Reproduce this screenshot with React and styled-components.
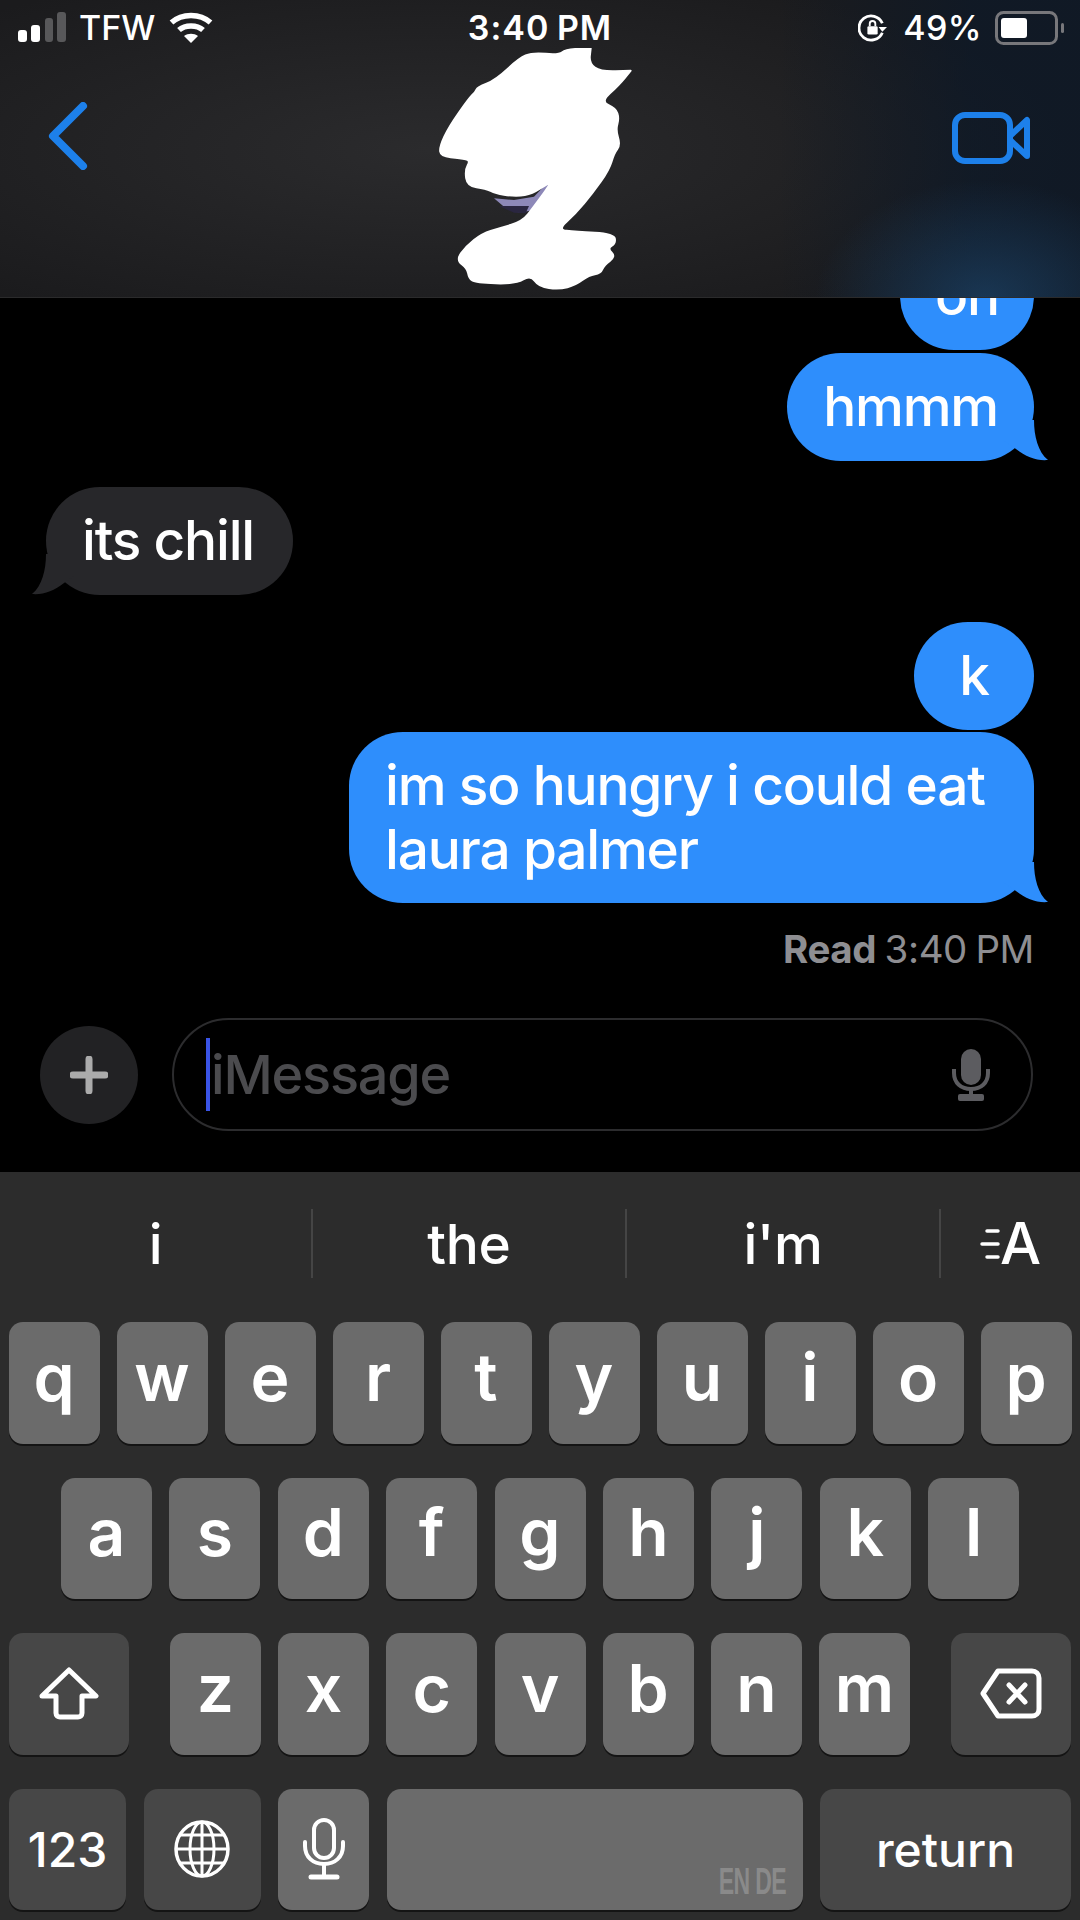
import React from 'react';
import styled, { createGlobalStyle } from 'styled-components';

const GlobalStyle = createGlobalStyle`
  html, body {
    margin: 0;
    padding: 0;
    background: #000;
  }
  * {
    box-sizing: border-box;
  }
`;

const FONT = `Inter, "Liberation Sans", sans-serif`;

const Screen = styled.div`
  width: 1080px;
  height: 1920px;
  display: flex;
  flex-direction: column;
  overflow: hidden;
  background: #000;
  font-family: ${FONT};
  color: #fff;
`;

const Header = styled.header`
  height: 298px;
  flex: none;
  border-bottom: 1px solid #2b2b2c;
  background:
    radial-gradient(170px 120px at 985px 300px, rgba(34, 84, 130, 0.5), rgba(34, 84, 130, 0) 100%),
    linear-gradient(90deg, rgba(10, 24, 42, 0) 72%, rgba(10, 24, 42, 0.62) 90%),
    radial-gradient(640px 190px at 430px 150px, #2b2b2d, #1b1b1d 100%);
`;

const StatusBar = styled.div`
  height: 48px;
  padding: 8px 15px 0 18px;
  display: grid;
  grid-template-columns: 1fr auto 1fr;
  align-items: center;
  font-size: 34px;
  line-height: 38px;
`;

const StatusLeft = styled.div`
  display: flex;
  align-items: center;
`;

const StatusRight = styled.div`
  display: flex;
  align-items: center;
  justify-content: flex-end;
`;

const Carrier = styled.span`
  margin-left: 12px;
  margin-right: 14px;
  font-weight: 500;
`;

const Clock = styled.span`
  font-weight: 600;
  word-spacing: -2px;
  letter-spacing: 1px;
  margin-left: -3px;
`;

const Percent = styled.span`
  margin-left: 15px;
  margin-right: 13px;
  font-weight: 500;
  letter-spacing: 0.4px;
`;

const NavRow = styled.div`
  height: 249px;
  padding: 0 50px 0 47px;
  display: grid;
  grid-template-columns: 1fr 240px 1fr;
`;

const BackIcon = styled.svg`
  width: 44px;
  height: 68px;
  margin-top: 54px;
`;

const VideoIcon = styled.svg`
  width: 78px;
  height: 52px;
  margin-top: 64px;
  justify-self: end;
`;

const Messages = styled.main`
  flex: 1;
  min-height: 0;
  overflow: hidden;
  padding: 0 46px;
  display: flex;
  flex-direction: column;
  justify-content: flex-end;
  align-items: flex-end;
`;

const Bubble = styled.div`
  position: relative;
  flex: none;
  min-height: 108px;
  padding: 22px ${(p) => (p.$width ? 0 : 36)}px;
  border-radius: 54px;
  font-size: 55px;
  line-height: 63.5px;
  letter-spacing: -1.2px;
  font-weight: 500;
  white-space: pre-line;
  background: ${(p) => (p.$incoming ? '#27272a' : '#2e8efc')};
  align-self: ${(p) => (p.$incoming ? 'flex-start' : 'flex-end')};
  margin-top: ${(p) => p.$top || 0}px;
  width: ${(p) => (p.$width ? `${p.$width}px` : 'auto')};
  min-width: ${(p) => p.$minWidth || 0}px;
  text-align: ${(p) => (p.$width ? 'center' : 'left')};
`;

const TailShape = styled.svg`
  position: absolute;
  bottom: 0;
  width: 46px;
  height: 41px;
  ${(p) => (p.$incoming ? 'left: -15px; transform: scaleX(-1);' : 'right: -15px;')}
`;

const ReadRow = styled.div`
  margin-top: 24px;
  margin-bottom: 47px;
  font-size: 38.5px;
  line-height: 44px;
  letter-spacing: -0.4px;
  word-spacing: -2px;
  color: #8e8e92;
`;

const ReadLabel = styled.span`
  font-weight: 700;
`;

const Composer = styled.div`
  height: 113px;
  flex: none;
  margin-bottom: 41px;
  padding: 0 47px 0 40px;
  display: flex;
  align-items: center;
  gap: 34px;
`;

const PlusButton = styled.div`
  width: 98px;
  height: 98px;
  flex: none;
  border-radius: 50%;
  background: #222224;
  display: flex;
  align-items: center;
  justify-content: center;
`;

const InputField = styled.div`
  flex: 1;
  height: 113px;
  border: 2px solid #2c2c2e;
  border-radius: 57px;
  padding: 0 40px 0 32px;
  display: flex;
  align-items: center;
`;

const Caret = styled.span`
  width: 4px;
  height: 73px;
  flex: none;
  background: #3a54e6;
`;

const Placeholder = styled.span`
  flex: 1;
  margin-left: 1px;
  font-size: 54px;
  font-weight: 500;
  letter-spacing: -1.2px;
  color: #4b4b4e;
`;

const Keyboard = styled.section`
  flex: none;
  height: 748px;
  background: #2c2c2c;
`;

const Suggestions = styled.div`
  height: 150px;
  padding-top: 37px;
  display: grid;
  grid-template-columns: 313px 314px 314px 139px;
  align-items: start;
`;

const Suggestion = styled.div`
  height: 69px;
  display: flex;
  align-items: center;
  justify-content: center;
  font-size: 55px;
  font-weight: 500;
  letter-spacing: -0.3px;
  border-right: ${(p) => (p.$last ? 'none' : '2px solid #454545')};
`;

const FormatA = styled.span`
  font-size: 58px;
  line-height: 69px;
  letter-spacing: 0;
`;

const KeyRows = styled.div`
  display: flex;
  flex-direction: column;
  gap: 34px;
`;

const KeyRow = styled.div`
  display: flex;
  justify-content: ${(p) => p.$justify || 'center'};
  gap: ${(p) => p.$gap || 17}px;
  padding: 0 9px;
`;

const KeyCluster = styled.div`
  display: flex;
  gap: 17.2px;
`;

const Key = styled.div`
  width: ${(p) => p.$width || 91}px;
  height: 121.5px;
  flex: none;
  border-radius: 14px;
  background: ${(p) => (p.$dark ? '#474747' : '#6b6b6b')};
  box-shadow: 0 2px 0 #141414;
  display: flex;
  align-items: center;
  justify-content: center;
  font-size: ${(p) => p.$size || 66}px;
  font-weight: ${(p) => p.$weight || 600};
`;

const LetterKey = styled(Key)`
  padding-bottom: 12px;
`;

const SpaceKey = styled(Key)`
  align-items: flex-end;
  justify-content: flex-end;
  padding: 0 16px 9px 0;
`;

const SpaceHint = styled.span`
  font-family: "Liberation Sans", sans-serif;
  font-size: 36px;
  line-height: 38px;
  font-weight: 700;
  letter-spacing: -1px;
  color: #8a8a8a;
  transform: scaleX(0.64);
  transform-origin: right center;
`;

const SignalIcon = () => (
  <svg width="49" height="32" viewBox="0 0 49 32">
    <rect x="0" y="18" width="9" height="12" rx="3" fill="#fff" />
    <rect x="13" y="13" width="9" height="17" rx="3" fill="#fff" />
    <rect x="27" y="6" width="8" height="24" rx="3" fill="#58585a" />
    <rect x="39" y="0" width="9" height="30" rx="3" fill="#58585a" />
  </svg>
);

const WifiIcon = () => (
  <svg width="44" height="32" viewBox="0 0 44 32" fill="none" stroke="#fff" strokeWidth="5.5">
    <path d="M2.5 10.5 C13 1 31 1 41.5 10.5" />
    <path d="M10 18 C16 12.5 28 12.5 34 18" />
    <path d="M22 31 L15 24 C19 21 25 21 29 24 Z" fill="#fff" stroke="none" />
  </svg>
);

const RotationLockIcon = () => (
  <svg width="30" height="28" viewBox="0 0 32 30" fill="none" stroke="#fff" strokeWidth="3">
    <path d="M26 20 A13 13 0 1 1 26 10" />
    <path d="M31 14 L26 19 L22 14 Z" fill="#fff" stroke="none" />
    <rect x="10" y="13" width="11" height="9" rx="1.5" fill="#fff" stroke="none" />
    <path d="M12.5 13 V10.5 A3 3 0 0 1 18.5 10.5 V13" strokeWidth="2" />
  </svg>
);

const BatteryIcon = () => (
  <svg width="70" height="34" viewBox="0 0 70 34" fill="none">
    <rect x="1.5" y="1.5" width="60" height="31" rx="7" stroke="#77777b" strokeWidth="3" />
    <rect x="6" y="7" width="26" height="20" rx="3" fill="#fff" />
    <rect x="66" y="12" width="3" height="10" rx="1.5" fill="#77777b" />
  </svg>
);

// outline of the scribble, smoothed with midpoints; doubled points stay sharp tips
const scribblePoints = [
  [175, 172], [230, 150], [300, 85], [340, 68], [420, 75], [440, 58], [515, 55], [515, 55], [510, 100],
  [545, 125], [635, 122], [635, 122], [600, 165], [545, 215], [590, 235], [600, 265], [590, 300], [604, 345],
  [585, 370], [570, 420], [520, 490], [470, 550], [415, 600], [470, 605], [585, 612], [590, 640],
  [565, 655], [590, 680], [555, 705], [545, 730], [510, 735], [470, 765], [420, 778], [360, 770],
  [335, 735], [290, 762], [170, 758], [150, 745], [145, 715], [112, 690], [140, 650], [190, 610],
  [240, 595], [310, 575], [345, 530], [402, 452], [370, 472], [330, 495], [280, 498], [230, 490],
  [200, 475], [145, 468], [138, 420], [155, 390], [125, 385], [65, 378], [62, 350], [90, 290],
  [150, 205], [170, 185],
];

const smoothPath = (points) => {
  const mid = (a, b) => [(a[0] + b[0]) / 2, (a[1] + b[1]) / 2];
  const start = mid(points[points.length - 1], points[0]);
  let d = `M${start[0]} ${start[1]}`;
  points.forEach((point, i) => {
    const end = mid(point, points[(i + 1) % points.length]);
    d += ` Q${point[0]} ${point[1]} ${end[0]} ${end[1]}`;
  });
  return `${d} Z`;
};

const RedactionScribble = () => (
  <svg width="240" height="249" viewBox="0 54 720 747">
    <path
      d="M225 505 L285 510 L345 500 L385 458 L402 458 L345 540 L300 548 L255 530 Z"
      fill="#8d88b8"
    />
    <path d="M240 528 L330 528 L320 550 L285 548 Z" fill="#2a2640" />
    <path d={smoothPath(scribblePoints)} fill="#fff" stroke="#fff" strokeWidth="6" strokeLinejoin="round" />
  </svg>
);

const Tail = ({ incoming }) => (
  <TailShape $incoming={incoming} viewBox="0 0 46 41">
    <path
      d="M31 0 C31 16 35 32 45 40 C34 41 23 37 13 29 L0 20 L0 0 Z"
      fill={incoming ? '#27272a' : '#2e8efc'}
    />
  </TailShape>
);

const MicSmall = () => (
  <svg width="40" height="52" viewBox="0 0 40 52" fill="none" stroke="#5c5c60" strokeWidth="4">
    <rect x="10" y="0" width="20" height="36" rx="10" fill="#5c5c60" stroke="none" />
    <path d="M3 20 V24 C3 34 10 40 20 40 C30 40 37 34 37 24 V20" />
    <path d="M20 40 V47" />
    <rect x="7" y="45" width="26" height="7" rx="2" fill="#5c5c60" stroke="none" />
  </svg>
);

const FormatLines = () => (
  <svg width="20" height="38" viewBox="0 0 20 38" stroke="#fff" strokeWidth="3.5" strokeLinecap="round">
    <path d="M7 6 H18" />
    <path d="M2 19 H18" />
    <path d="M7 32 H18" />
  </svg>
);

const ShiftIcon = () => (
  <svg width="60" height="53" viewBox="0 0 60 53" fill="none" stroke="#fff" strokeWidth="5" strokeLinejoin="round">
    <path d="M30 3 L57 29 H43 V46 C43 49 41 50 39 50 H21 C19 50 17 49 17 46 V29 H3 Z" />
  </svg>
);

const BackspaceIcon = () => (
  <svg width="62" height="51" viewBox="0 0 62 51" fill="none" stroke="#fff" strokeWidth="5" strokeLinejoin="round" strokeLinecap="round">
    <path d="M18 3 H52 C56 3 59 6 59 10 V41 C59 45 56 48 52 48 H18 L3 25.5 Z" />
    <path d="M29 17 L45 34 M45 17 L29 34" />
  </svg>
);

const GlobeIcon = () => (
  <svg width="56" height="58" viewBox="0 0 56 58" fill="none" stroke="#fff" strokeWidth="3">
    <ellipse cx="28" cy="29" rx="26" ry="27" strokeWidth="3.5" />
    <ellipse cx="28" cy="29" rx="12" ry="27" />
    <path d="M28 2 V56 M2 29 H54 M6 15 H50 M6 43 H50" />
  </svg>
);

const MicKeyIcon = () => (
  <svg width="44" height="62" viewBox="0 0 44 62" fill="none" stroke="#fff" strokeWidth="4" strokeLinecap="round">
    <rect x="12" y="2" width="20" height="38" rx="10" />
    <path d="M3 24 V28 C3 39 11 46 22 46 C33 46 41 39 41 28 V24" />
    <path d="M22 46 V57" />
    <path d="M9 59 H35" strokeWidth="5" />
  </svg>
);

const rowOne = ['q', 'w', 'e', 'r', 't', 'y', 'u', 'i', 'o', 'p'];
const rowTwo = ['a', 's', 'd', 'f', 'g', 'h', 'j', 'k', 'l'];
const rowThree = ['z', 'x', 'c', 'v', 'b', 'n', 'm'];

const App = () => (
  <Screen>
    <GlobalStyle />
    <Header>
      <StatusBar>
        <StatusLeft>
          <SignalIcon />
          <Carrier>TFW</Carrier>
          <WifiIcon />
        </StatusLeft>
        <Clock>3:40 PM</Clock>
        <StatusRight>
          <RotationLockIcon />
          <Percent>49%</Percent>
          <BatteryIcon />
        </StatusRight>
      </StatusBar>
      <NavRow>
        <BackIcon viewBox="0 0 44 68" fill="none" stroke="#1d80ea" strokeWidth="8" strokeLinecap="round" strokeLinejoin="round">
          <path d="M36 4 L6 34 L36 64" />
        </BackIcon>
        <RedactionScribble />
        <VideoIcon viewBox="0 0 78 52" fill="none" stroke="#1d80ea" strokeWidth="6" strokeLinejoin="round">
          <rect x="3" y="3" width="55" height="46" rx="10" />
          <path d="M58 24 L75 8 V44 L58 28 Z" />
        </VideoIcon>
      </NavRow>
    </Header>

    <Messages>
      <Bubble $width={134}>on</Bubble>
      <Bubble $top={3}>
        hmmm
        <Tail />
      </Bubble>
      <Bubble $incoming $top={26} $minWidth={247}>
        its chill
        <Tail incoming />
      </Bubble>
      <Bubble $top={27} $width={120}>k</Bubble>
      <Bubble $top={2} $minWidth={685}>
        {'im so hungry i could eat\nlaura palmer'}
        <Tail />
      </Bubble>
      <ReadRow>
        <ReadLabel>Read</ReadLabel> 3:40 PM
      </ReadRow>
    </Messages>

    <Composer>
      <PlusButton>
        <svg width="38" height="38" viewBox="0 0 38 38" stroke="#ababab" strokeWidth="7" strokeLinecap="round">
          <path d="M19 3 V35 M3 19 H35" />
        </svg>
      </PlusButton>
      <InputField>
        <Caret />
        <Placeholder>iMessage</Placeholder>
        <MicSmall />
      </InputField>
    </Composer>

    <Keyboard>
      <Suggestions>
        <Suggestion>i</Suggestion>
        <Suggestion>the</Suggestion>
        <Suggestion>i'm</Suggestion>
        <Suggestion $last>
          <FormatLines />
          <FormatA>A</FormatA>
        </Suggestion>
      </Suggestions>
      <KeyRows>
        <KeyRow>
          {rowOne.map((letter) => (
            <LetterKey key={letter}>{letter}</LetterKey>
          ))}
        </KeyRow>
        <KeyRow $gap={17.4}>
          {rowTwo.map((letter) => (
            <LetterKey key={letter}>{letter}</LetterKey>
          ))}
        </KeyRow>
        <KeyRow $justify="space-between">
          <Key $dark $width={120}>
            <ShiftIcon />
          </Key>
          <KeyCluster>
            {rowThree.map((letter) => (
              <LetterKey key={letter}>{letter}</LetterKey>
            ))}
          </KeyCluster>
          <Key $dark $width={120}>
            <BackspaceIcon />
          </Key>
        </KeyRow>
        <KeyRow $justify="space-between">
          <Key $dark $width={117} $size={48} $weight={500}>123</Key>
          <Key $dark $width={117}>
            <GlobeIcon />
          </Key>
          <Key>
            <MicKeyIcon />
          </Key>
          <SpaceKey $width={416}>
            <SpaceHint>EN DE</SpaceHint>
          </SpaceKey>
          <Key $dark $width={251} $size={48} $weight={500}>return</Key>
        </KeyRow>
      </KeyRows>
    </Keyboard>
  </Screen>
);

export default App;
